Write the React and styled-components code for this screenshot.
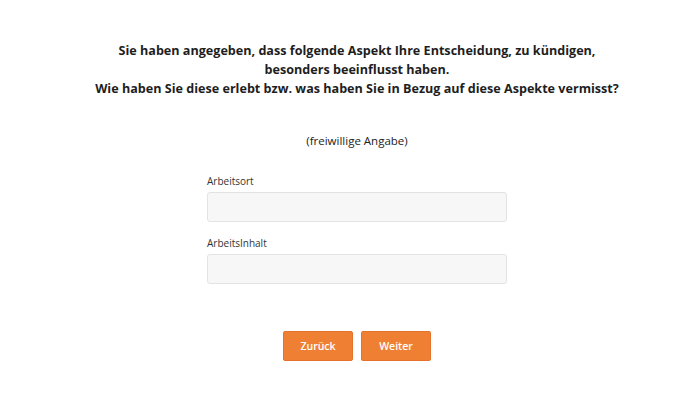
import React from "react";
import styled, { createGlobalStyle } from "styled-components";

const Global = createGlobalStyle`
  html, body { margin: 0; padding: 0; background: #fff; }
  body { font-family: "Open Sans", "Noto Sans", sans-serif; color: #333; }
`;

const Page = styled.div`
  width: 700px;
  height: 400px;
  box-sizing: border-box;
  padding: 41px 0 0 14px;
  display: flex;
  flex-direction: column;
  align-items: center;
`;

const Heading = styled.h1`
  margin: 0;
  font-size: 12.6px;
  font-weight: 700;
  line-height: 19px;
  color: #1e1e1e;
  text-align: center;
`;

const Note = styled.p`
  margin: 34px 0 0;
  font-size: 11.5px;
  line-height: 18px;
  color: #222;
`;

const Form = styled.div`
  margin-top: 24px;
  width: 300px;
  display: flex;
  flex-direction: column;
`;

const Field = styled.div`
  display: flex;
  flex-direction: column;
  margin-bottom: 14px;
`;

const Label = styled.label`
  font-size: 10px;
  line-height: 14px;
  color: #333;
  margin-bottom: 4px;
`;

const Input = styled.input`
  box-sizing: border-box;
  width: 300px;
  height: 30px;
  background: #f7f7f7;
  border: 1px solid #e3e3e3;
  border-radius: 3px;
  outline: none;
`;

const Buttons = styled.div`
  margin-top: 33px;
  display: flex;
  gap: 8px;
`;

const Button = styled.button`
  box-sizing: border-box;
  width: 70px;
  height: 30px;
  background: #ef7f33;
  border: 1px solid #e6712a;
  border-radius: 2px;
  color: #fff;
  font-family: "Open Sans", sans-serif;
  font-size: 10.5px;
  font-weight: 600;
  cursor: pointer;
`;

export default function App() {
  return (
    <>
      <Global />
      <Page>
        <Heading>
          Sie haben angegeben, dass folgende Aspekt Ihre Entscheidung, zu kündigen,
          <br />
          besonders beeinflusst haben.
          <br />
          Wie haben Sie diese erlebt bzw. was haben Sie in Bezug auf diese Aspekte vermisst?
        </Heading>
        <Note>(freiwillige Angabe)</Note>
        <Form>
          <Field>
            <Label>Arbeitsort</Label>
            <Input type="text" />
          </Field>
          <Field>
            <Label>ArbeitsInhalt</Label>
            <Input type="text" />
          </Field>
        </Form>
        <Buttons>
          <Button>Zurück</Button>
          <Button>Weiter</Button>
        </Buttons>
      </Page>
    </>
  );
}
